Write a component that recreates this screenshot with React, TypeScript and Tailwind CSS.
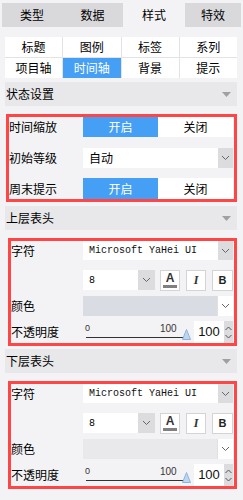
import React from "react";

const F = "font-['Microsoft_YaHei','Noto_Sans_CJK_SC',sans-serif]";

function Chevron({ className = "" }: { className?: string }) {
  return (
    <svg width="9" height="6" viewBox="0 0 9 6" className={className}>
      <path d="M1 1 L4.5 4.5 L8 1" fill="none" stroke="#666" strokeWidth="1" />
    </svg>
  );
}

function Header({ title }: { title: string }) {
  return (
    <div className="ml-[5px] w-[232px] h-[24px] bg-[#e8e8ea] flex items-center justify-between pl-[1px] pr-[6px]">
      <span className="text-[12px] text-black">{title}</span>
      <svg width="9" height="5" viewBox="0 0 9 5">
        <path d="M0 0 L9 0 L4.5 5 Z" fill="#a0a0a2" />
      </svg>
    </div>
  );
}

function Toggle() {
  return (
    <div className="w-[150px] h-full flex text-[12px]">
      <div className="flex-1 bg-[#45a0f5] text-white flex items-center justify-center">开启</div>
      <div className="flex-1 bg-white text-black flex items-center justify-center">关闭</div>
    </div>
  );
}

function StyleBox({ colorBg }: { colorBg: string }) {
  return (
    <div className="ml-[8px] w-[229px] h-[108px] border-[3px] border-[#ff4646] flex flex-col text-[12px] text-black">
      <div className="h-[19px] flex items-center">
        <div className="w-[72px]">字符</div>
        <div className="w-[150px] h-full flex bg-white">
          <div className="flex-1 flex items-center pl-[6px] font-['Liberation_Mono',monospace] text-[10px] text-[#111]">
            Microsoft YaHei UI
          </div>
          <div className="w-[15px] bg-[#dcdcdf] flex items-center justify-center">
            <Chevron />
          </div>
        </div>
      </div>
      <div className="h-[20px] mt-[10px] flex items-center">
        <div className="w-[72px]" />
        <div className="w-[72px] h-full flex bg-white">
          <div className="flex-1 flex items-center pl-[6px] font-['Liberation_Mono',monospace] text-[10px]">8</div>
          <div className="w-[17px] bg-[#dcdcdf] flex items-center justify-center">
            <Chevron />
          </div>
        </div>
        <div className="ml-[5px] w-[20px] h-[21px] bg-white border border-[#d4d4d6] flex flex-col items-center justify-center">
          <span className="font-['Liberation_Sans',sans-serif] font-bold text-[12px] leading-[11px] text-[#333]">A</span>
          <div className="w-[14px] h-[3px] bg-[#808080] mt-[1px]" />
        </div>
        <div className="ml-[6px] w-[20px] h-[21px] bg-white border border-[#d4d4d6] flex items-center justify-center font-['Liberation_Serif',serif] italic font-bold text-[12px] text-[#333]">
          I
        </div>
        <div className="ml-[6px] w-[21px] h-[21px] bg-white border border-[#d4d4d6] flex items-center justify-center font-['Liberation_Sans',sans-serif] font-bold text-[11px] text-[#222]">
          B
        </div>
      </div>
      <div className="h-[20px] mt-[6px] flex items-center">
        <div className="w-[72px]">颜色</div>
        <div className="w-[150px] h-full flex">
          <div className={`flex-1 ${colorBg}`} />
          <div className="w-[16px] bg-white border-l border-[#e0e0e0] flex items-center justify-center">
            <Chevron />
          </div>
        </div>
      </div>
      <div className="h-[22px] mt-[5px] flex items-center">
        <div className="w-[72px]">不透明度</div>
        <div className="relative w-[111px] h-full">
          <span className="absolute left-[2px] top-[3px] text-[9px] leading-[9px] text-[#333] font-['Liberation_Sans',sans-serif]">0</span>
          <span className="absolute left-[77px] top-[3px] text-[10px] leading-[9px] text-[#333] font-['Liberation_Sans',sans-serif]">100</span>
          <div className="absolute left-[3px] top-[16px] w-[101px] h-[1px] bg-[#333]" />
          <svg className="absolute left-[99px] top-[8px]" width="9" height="11" viewBox="0 0 9 11">
            <path d="M4.5 0.5 L8.5 10.5 L0.5 10.5 Z" fill="#bcd6f2" stroke="#8fb3dc" strokeWidth="1" />
          </svg>
        </div>
        <div className="w-[30px] h-full bg-white flex items-center justify-center font-['Liberation_Sans',sans-serif] text-[13px] text-[#111]">
          100
        </div>
        <div className="w-[9px] h-full bg-[#dcdcdf] flex flex-col items-center justify-center gap-[3px]">
          <svg width="7" height="5" viewBox="0 0 7 5">
            <path d="M0.5 4 L3.5 1 L6.5 4" fill="none" stroke="#555" strokeWidth="1" />
          </svg>
          <svg width="7" height="5" viewBox="0 0 7 5">
            <path d="M0.5 1 L3.5 4 L6.5 1" fill="none" stroke="#555" strokeWidth="1" />
          </svg>
        </div>
      </div>
    </div>
  );
}

export default function App() {
  const tabs = [
    { t: "类型", w: "w-[60px]", bg: "bg-[#d9d9dc]" },
    { t: "数据", w: "w-[61px]", bg: "bg-[#d9d9dc]" },
    { t: "样式", w: "w-[62px]", bg: "bg-[#f3f3f5]" },
    { t: "特效", w: "w-[56px]", bg: "bg-[#d9d9dc]" },
  ];
  const subs = ["标题", "图例", "标签", "系列", "项目轴", "时间轴", "背景", "提示"];
  return (
    <div className={`w-[243px] h-[500px] bg-[#f3f3f5] pt-[3px] overflow-hidden ${F}`}>
      <div className="ml-[2px] h-[24px] flex">
        {tabs.map((x) => (
          <div key={x.t} className={`${x.w} ${x.bg} h-full flex items-center justify-center text-[12px] text-black`}>
            {x.t}
          </div>
        ))}
      </div>
      <div className="ml-[5px] mt-[10px] w-[232px] grid grid-cols-4 gap-[1px] bg-[#e3e3e5]">
        {subs.map((s) => (
          <div
            key={s}
            className={`h-[20px] flex items-center justify-center text-[12px] ${
              s === "时间轴" ? "bg-[#45a0f5] text-white" : "bg-white text-black"
            }`}
          >
            {s}
          </div>
        ))}
      </div>
      <div className="mt-[4px]">
        <Header title="状态设置" />
      </div>
      <div className="mt-[8px] ml-[6px] w-[231px] h-[88px] border-[3px] border-[#ff4646] flex flex-col text-[12px] text-black">
        <div className="h-[20px] flex items-center">
          <div className="w-[74px]">时间缩放</div>
          <Toggle />
        </div>
        <div className="h-[20px] mt-[11px] flex items-center">
          <div className="w-[74px]">初始等级</div>
          <div className="w-[150px] h-full flex bg-white">
            <div className="flex-1 flex items-center pl-[6px]">自动</div>
            <div className="w-[15px] bg-[#dcdcdf] flex items-center justify-center">
              <Chevron />
            </div>
          </div>
        </div>
        <div className="h-[21px] mt-[10px] flex items-center">
          <div className="w-[74px]">周末提示</div>
          <Toggle />
        </div>
      </div>
      <div className="mt-[4px]">
        <Header title="上层表头" />
      </div>
      <div className="mt-[8px]">
        <StyleBox colorBg="bg-[#d9dce3]" />
      </div>
      <div className="mt-[3px]">
        <Header title="下层表头" />
      </div>
      <div className="mt-[8px]">
        <StyleBox colorBg="bg-[#e9e9eb]" />
      </div>
    </div>
  );
}
